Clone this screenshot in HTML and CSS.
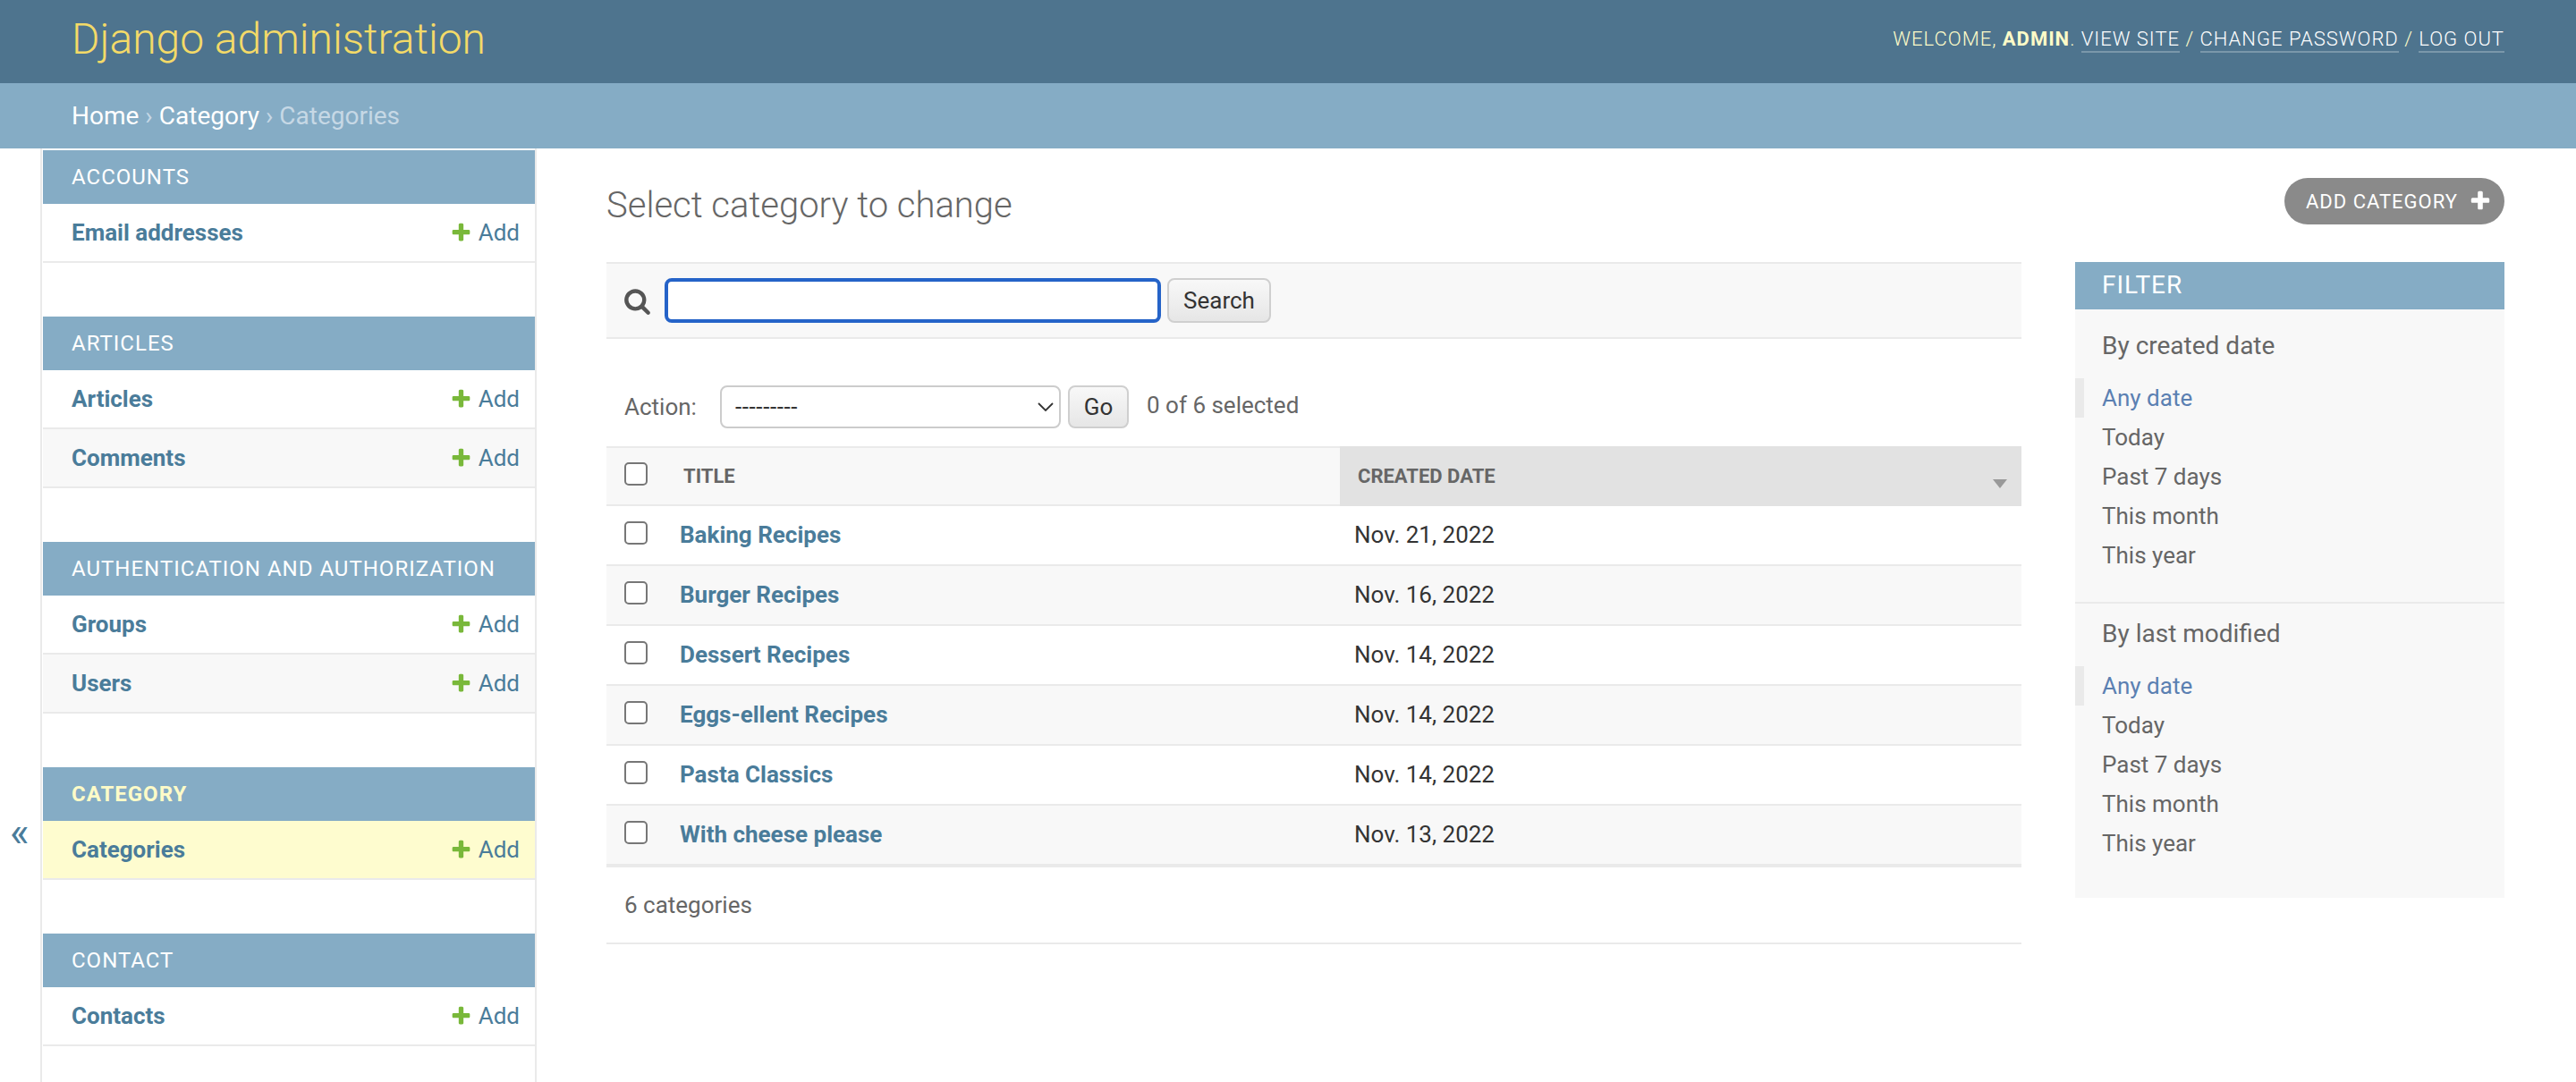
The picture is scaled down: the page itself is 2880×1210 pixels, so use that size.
FILE: index.html
```html
<!DOCTYPE html>
<html lang="en">
<head>
<meta charset="utf-8">
<title>Select category to change | Django site admin</title>
<link rel="stylesheet" href="styles.css">
</head>
<body>
<header class="site-header">
  <h1 class="brand">Django administration</h1>
  <div class="user-tools">WELCOME, <strong>ADMIN</strong>. <a href="#">VIEW SITE</a> / <a href="#">CHANGE PASSWORD</a> / <a href="#">LOG OUT</a></div>
</header>
<nav class="breadcrumbs"><a href="#">Home</a> › <a href="#">Category</a> › Categories</nav>
<div class="main">
  <div class="toggle">«</div>
  <aside class="sidebar">
    <section class="app">
      <h2 class="app-caption">Accounts</h2>
      <div class="app-row"><a class="model" href="#">Email addresses</a><a class="add" href="#"><svg class="plus" viewBox="0 0 1792 1792"><path d="M1600 736v192q0 40-28 68t-68 28h-416v416q0 40-28 68t-68 28h-192q-40 0-68-28t-28-68v-416h-416q-40 0-68-28t-28-68v-192q0-40 28-68t68-28h416v-416q0-40 28-68t68-28h192q40 0 68 28t28 68v416h416q40 0 68 28t28 68z"/></svg>Add</a></div>
    </section>
    <section class="app">
      <h2 class="app-caption">Articles</h2>
      <div class="app-row"><a class="model" href="#">Articles</a><a class="add" href="#"><svg class="plus" viewBox="0 0 1792 1792"><path d="M1600 736v192q0 40-28 68t-68 28h-416v416q0 40-28 68t-68 28h-192q-40 0-68-28t-28-68v-416h-416q-40 0-68-28t-28-68v-192q0-40 28-68t68-28h416v-416q0-40 28-68t68-28h192q40 0 68 28t28 68v416h416q40 0 68 28t28 68z"/></svg>Add</a></div>
      <div class="app-row alt"><a class="model" href="#">Comments</a><a class="add" href="#"><svg class="plus" viewBox="0 0 1792 1792"><path d="M1600 736v192q0 40-28 68t-68 28h-416v416q0 40-28 68t-68 28h-192q-40 0-68-28t-28-68v-416h-416q-40 0-68-28t-28-68v-192q0-40 28-68t68-28h416v-416q0-40 28-68t68-28h192q40 0 68 28t28 68v416h416q40 0 68 28t28 68z"/></svg>Add</a></div>
    </section>
    <section class="app">
      <h2 class="app-caption">Authentication and Authorization</h2>
      <div class="app-row"><a class="model" href="#">Groups</a><a class="add" href="#"><svg class="plus" viewBox="0 0 1792 1792"><path d="M1600 736v192q0 40-28 68t-68 28h-416v416q0 40-28 68t-68 28h-192q-40 0-68-28t-28-68v-416h-416q-40 0-68-28t-28-68v-192q0-40 28-68t68-28h416v-416q0-40 28-68t68-28h192q40 0 68 28t28 68v416h416q40 0 68 28t28 68z"/></svg>Add</a></div>
      <div class="app-row alt"><a class="model" href="#">Users</a><a class="add" href="#"><svg class="plus" viewBox="0 0 1792 1792"><path d="M1600 736v192q0 40-28 68t-68 28h-416v416q0 40-28 68t-68 28h-192q-40 0-68-28t-28-68v-416h-416q-40 0-68-28t-28-68v-192q0-40 28-68t68-28h416v-416q0-40 28-68t68-28h192q40 0 68 28t28 68v416h416q40 0 68 28t28 68z"/></svg>Add</a></div>
    </section>
    <section class="app">
      <h2 class="app-caption current">Category</h2>
      <div class="app-row selected"><a class="model" href="#">Categories</a><a class="add" href="#"><svg class="plus" viewBox="0 0 1792 1792"><path d="M1600 736v192q0 40-28 68t-68 28h-416v416q0 40-28 68t-68 28h-192q-40 0-68-28t-28-68v-416h-416q-40 0-68-28t-28-68v-192q0-40 28-68t68-28h416v-416q0-40 28-68t68-28h192q40 0 68 28t28 68v416h416q40 0 68 28t28 68z"/></svg>Add</a></div>
    </section>
    <section class="app">
      <h2 class="app-caption">Contact</h2>
      <div class="app-row"><a class="model" href="#">Contacts</a><a class="add" href="#"><svg class="plus" viewBox="0 0 1792 1792"><path d="M1600 736v192q0 40-28 68t-68 28h-416v416q0 40-28 68t-68 28h-192q-40 0-68-28t-28-68v-416h-416q-40 0-68-28t-28-68v-192q0-40 28-68t68-28h416v-416q0-40 28-68t68-28h192q40 0 68 28t28 68v416h416q40 0 68 28t28 68z"/></svg>Add</a></div>
    </section>
  </aside>
  <main class="content">
    <div class="title-row">
      <h1 class="page-title">Select category to change</h1>
      <a class="add-button" href="#">ADD CATEGORY<svg class="plus-white" viewBox="0 0 1792 1792"><path d="M1600 736v192q0 40-28 68t-68 28h-416v416q0 40-28 68t-68 28h-192q-40 0-68-28t-28-68v-416h-416q-40 0-68-28t-28-68v-192q0-40 28-68t68-28h416v-416q0-40 28-68t68-28h192q40 0 68 28t28 68v416h416q40 0 68 28t28 68z"/></svg></a>
    </div>
    <div class="changelist">
      <div class="results-col">
        <form class="toolbar">
          <svg class="search-icon" viewBox="0 0 1792 1792"><path d="M1216 832q0-185-131.5-316.5t-316.5-131.5-316.5 131.5-131.5 316.5 131.5 316.5 316.5 131.5 316.5-131.5 131.5-316.5zm512 832q0 52-38 90t-90 38q-54 0-90-38l-343-342q-179 124-399 124-143 0-273.5-55.5t-225-150-150-225-55.5-273.5 55.5-273.5 150-225 225-150 273.5-55.5 273.5 55.5 225 150 150 225 55.5 273.5q0 220-124 399l343 343q37 37 37 90z"/></svg>
          <input class="search-input" type="text" aria-label="Search">
          <button class="btn search-btn" type="button">Search</button>
        </form>
        <div class="actions">
          <label class="action-label">Action:</label>
          <div class="select-wrap">
            <select class="action-select"><option>---------</option></select>
            <svg class="chevron" viewBox="0 0 18 10"><path d="M1 1l8 8 8-8"/></svg>
          </div>
          <button class="btn go-btn" type="button">Go</button>
          <span class="counter">0 of 6 selected</span>
        </div>
        <div class="results">
          <table class="result-table">
            <thead>
              <tr>
                <th class="check-col"><input class="check" type="checkbox"></th>
                <th class="title-col">TITLE</th>
                <th class="date-col"><div class="sorted-head"><span>CREATED DATE</span><svg class="sort-arrow" viewBox="0 0 16 10"><path d="M0 0h16L8 10z"/></svg></div></th>
              </tr>
            </thead>
            <tbody>
              <tr><td class="check-cell"><input class="check" type="checkbox"></td><td class="name-cell"><a href="#">Baking Recipes</a></td><td class="date-cell">Nov. 21, 2022</td></tr>
              <tr class="even"><td class="check-cell"><input class="check" type="checkbox"></td><td class="name-cell"><a href="#">Burger Recipes</a></td><td class="date-cell">Nov. 16, 2022</td></tr>
              <tr><td class="check-cell"><input class="check" type="checkbox"></td><td class="name-cell"><a href="#">Dessert Recipes</a></td><td class="date-cell">Nov. 14, 2022</td></tr>
              <tr class="even"><td class="check-cell"><input class="check" type="checkbox"></td><td class="name-cell"><a href="#">Eggs-ellent Recipes</a></td><td class="date-cell">Nov. 14, 2022</td></tr>
              <tr><td class="check-cell"><input class="check" type="checkbox"></td><td class="name-cell"><a href="#">Pasta Classics</a></td><td class="date-cell">Nov. 14, 2022</td></tr>
              <tr class="even"><td class="check-cell"><input class="check" type="checkbox"></td><td class="name-cell"><a href="#">With cheese please</a></td><td class="date-cell">Nov. 13, 2022</td></tr>
            </tbody>
          </table>
        </div>
        <p class="paginator">6 categories</p>
      </div>
      <aside class="filter">
        <h2 class="filter-title">FILTER</h2>
        <section class="filter-section first">
          <h3 class="filter-heading">By created date</h3>
          <ul class="filter-list">
            <li class="selected-item"><a href="#">Any date</a></li>
            <li><a href="#">Today</a></li>
            <li><a href="#">Past 7 days</a></li>
            <li><a href="#">This month</a></li>
            <li><a href="#">This year</a></li>
          </ul>
        </section>
        <section class="filter-section last">
          <h3 class="filter-heading">By last modified</h3>
          <ul class="filter-list">
            <li class="selected-item"><a href="#">Any date</a></li>
            <li><a href="#">Today</a></li>
            <li><a href="#">Past 7 days</a></li>
            <li><a href="#">This month</a></li>
            <li><a href="#">This year</a></li>
          </ul>
        </section>
      </aside>
    </div>
  </main>
</div>
</body>
</html>
```

FILE: styles.css
```css
* { box-sizing: border-box; }
html, body { height: 100%; }
body {
  margin: 0;
  height: 1210px;
  overflow: hidden;
  background: #fff;
  color: #333;
  font-family: Roboto, "Liberation Sans", sans-serif;
  font-size: 26px;
  display: flex;
  flex-direction: column;
}
a { text-decoration: none; color: inherit; }
h1, h2, h3, p, ul { margin: 0; padding: 0; }
ul { list-style: none; }

.site-header {
  height: 93px;
  flex: none;
  background: #4e748e;
  padding: 0 80px;
  display: flex;
  justify-content: space-between;
  align-items: center;
  padding-bottom: 5px;
}
.brand { font-size: 48px; font-weight: 300; color: #f3da68; line-height: 60px; }
.user-tools { font-size: 22px; font-weight: 300; letter-spacing: 1px; color: #fdfbc8; line-height: 28px; }
.user-tools strong { font-weight: 700; }
.user-tools a { color: #fff; border-bottom: 2px solid rgba(255,255,255,.25); padding-bottom: 1px; }

.breadcrumbs {
  height: 73px;
  flex: none;
  background: #85acc5;
  padding: 0 80px;
  display: flex;
  align-items: center;
  gap: 7px;
  font-size: 28px;
  color: #c6d8e5;
}
.breadcrumbs a { color: #fff; }

.main { flex: 1; display: flex; min-height: 0; }
.toggle {
  width: 47px;
  flex: none;
  border-right: 2px solid #eaeaea;
  color: #4a7c9a;
  font-size: 46px;
  line-height: 40px;
  padding: 744px 0 0 11px;
}
.sidebar {
  width: 553px;
  flex: none;
  border-right: 2px solid #eaeaea;
  padding: 2px 0 0 1px;
}
.app { margin-bottom: 60px; }
.app-caption {
  height: 60px;
  background: #85acc5;
  padding-left: 32px;
  font-size: 24px;
  font-weight: 400;
  letter-spacing: 1px;
  line-height: 60px;
  color: #fff;
  text-transform: uppercase;
}
.app-caption.current { color: #fdfbc8; font-weight: 700; }
.app-row {
  height: 66px;
  display: flex;
  justify-content: space-between;
  align-items: center;
  border-bottom: 2px solid #eaeaea;
  padding: 0 17px 0 32px;
  font-size: 26px;
}
.app-row.alt { background: #f8f8f8; }
.app-row.selected { background: #fefccf; }
.model { font-weight: 700; color: #4a7c9a; }
.add { color: #4a7c9a; display: flex; align-items: center; gap: 7px; }
.plus { width: 25px; height: 25px; fill: #79b83a; }

.content { flex: 1; min-width: 0; padding: 33px 80px 0 78px; }
.title-row { display: flex; justify-content: space-between; align-items: center; height: 52px; margin-bottom: 42px; }
.page-title { font-size: 40px; font-weight: 300; color: #666; line-height: 52px; padding-top: 10px; }
.add-button {
  height: 52px;
  width: 246px;
  border-radius: 26px;
  background: #8a8a8a;
  color: #fff;
  font-size: 22px;
  letter-spacing: 1px;
  display: flex;
  align-items: center;
  padding-left: 24px;
  gap: 12px;
}
.plus-white { width: 26px; height: 26px; fill: #fff; flex: none; }

.changelist { display: flex; gap: 60px; align-items: flex-start; }
.results-col { flex: 1; min-width: 0; }

.toolbar {
  height: 86px;
  background: #f8f8f8;
  border-top: 2px solid #eaeaea;
  border-bottom: 2px solid #eaeaea;
  padding: 0 20px;
  display: flex;
  align-items: center;
}
.search-icon { width: 31px; height: 31px; fill: #555; margin: 0 15px 0 -1px; flex: none; }
.search-input {
  width: 555px;
  height: 50px;
  border: 4px solid #2563c8;
  border-radius: 8px;
  background: #fff;
  outline: none;
  padding: 0;
}
.btn {
  height: 100%;
  background: linear-gradient(#f8f8f8, #e6e6e6);
  border: 2px solid #cfcfcf;
  border-radius: 8px;
  font-family: inherit;
  font-size: 26px;
  color: #333;
  padding: 0;
}
.search-btn { width: 116px; height: 50px; margin-left: 7px; }
.go-btn { width: 68px; height: 48px; margin-left: 8px; }

.actions { height: 48px; margin: 52px 0 20px; padding-left: 20px; display: flex; align-items: center; }
.action-label { color: #666; width: 107px; }
.select-wrap { position: relative; width: 381px; height: 48px; }
.action-select {
  appearance: none;
  width: 100%;
  height: 100%;
  border: 2px solid #ccc;
  border-radius: 8px;
  background: #fff;
  font-family: inherit;
  font-size: 26px;
  letter-spacing: .6px;
  color: #333;
  padding: 0 15px;
}
.chevron {
  position: absolute;
  right: 8px;
  top: 19px;
  width: 18px;
  height: 10px;
  fill: none;
  stroke: #333;
  stroke-width: 1.8;
  pointer-events: none;
}
.counter { margin-left: 20px; color: #666; padding-bottom: 4px; }

.results { border-bottom: 2px solid #eaeaea; }
.result-table { width: 100%; border-collapse: separate; border-spacing: 0; table-layout: fixed; }
.result-table th {
  height: 67px;
  background: #f8f8f8;
  border-top: 2px solid #eaeaea;
  border-bottom: 2px solid #eaeaea;
  font-size: 22px;
  font-weight: 700;
  color: #666;
  text-align: left;
  padding: 0 20px;
}
.result-table th.check-col { width: 67px; vertical-align: top; padding: 16px 0 0 20px; }
.result-table th.title-col { width: 753px; padding-left: 19px; }
.result-table th.date-col { background: #e2e2e2; border-color: #e2e2e2; padding-right: 16px; }
.sorted-head { display: flex; justify-content: space-between; align-items: flex-end; }
.sort-arrow { width: 16px; height: 10px; fill: #999; margin-bottom: -1px; }
.result-table td {
  height: 67px;
  border-bottom: 2px solid #eaeaea;
  padding: 0 16px 2px;
  color: #333;
  font-size: 26px;
}
.result-table .even td { background: #f8f8f8; }
.result-table td.check-cell { vertical-align: top; padding: 17px 0 0 20px; }
.result-table td.name-cell { padding-left: 15px; }
.name-cell a { font-weight: 700; color: #4a7c9a; }
.check {
  appearance: none;
  display: block;
  width: 26px;
  height: 26px;
  margin: 0;
  background: #fff;
  border: 2px solid #777;
  border-radius: 5px;
}
.paginator {
  height: 86px;
  padding-left: 20px;
  border-bottom: 2px solid #eaeaea;
  line-height: 84px;
  color: #666;
}

.filter { width: 480px; flex: none; background: #f8f8f8; }
.filter-title {
  height: 53px;
  background: #85acc5;
  color: #fff;
  font-size: 28px;
  font-weight: 400;
  letter-spacing: 1px;
  line-height: 52px;
  padding-left: 30px;
}
.filter-section.first { padding: 7px 0 30px; border-bottom: 2px solid #eaeaea; }
.filter-section.last { padding-bottom: 39px; }
.filter-heading { height: 66px; line-height: 68px; font-size: 28px; font-weight: 400; color: #666; padding-left: 30px; margin-bottom: 4px; }
.filter-list li { height: 44px; line-height: 44px; padding-left: 30px; color: #666; font-size: 26px; }
.filter-list li.selected-item { border-left: 10px solid #eaeaea; padding-left: 20px; color: #5b80b2; }
```
